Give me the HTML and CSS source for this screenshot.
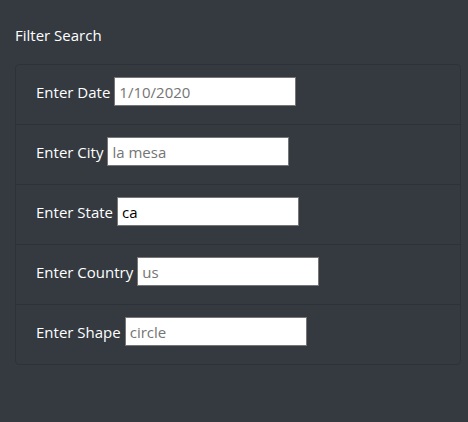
FILE: index.html
```html
<!DOCTYPE html>
<html>
<head>
<meta charset="utf-8">
<link rel="stylesheet" href="styles.css">
</head>
<body>
<div class="page">
  <div class="title">Filter Search</div>
  <ul class="filters">
    <li class="filter"><label for="date">Enter Date</label><input id="date" type="text" placeholder="1/10/2020"></li>
    <li class="filter"><label for="city">Enter City</label><input id="city" type="text" placeholder="la mesa"></li>
    <li class="filter"><label for="state">Enter State</label><input id="state" type="text" value="ca"></li>
    <li class="filter"><label for="country">Enter Country</label><input id="country" type="text" placeholder="us"></li>
    <li class="filter"><label for="shape">Enter Shape</label><input id="shape" type="text" placeholder="circle"></li>
  </ul>
</div>
</body>
</html>
```

FILE: styles.css
```css
html, body {
  margin: 0;
  background: #343a40;
  height: 100%;
}
body {
  font-family: "Open Sans", "Noto Sans", sans-serif;
  font-size: 15px;
  color: #ffffff;
}
.page {
  padding: 23px 7px 0 15px;
}
.title {
  line-height: 24px;
  margin-bottom: 17px;
}
.filters {
  list-style: none;
  margin: 0;
  padding: 0;
  border: 1px solid rgba(0, 0, 0, 0.125);
  border-radius: 4px;
}
.filter {
  display: flex;
  align-items: baseline;
  gap: 4px;
  padding: 12px 20px 18px;
  border-top: 1px solid rgba(0, 0, 0, 0.125);
}
.filter:first-child {
  border-top: none;
}
.filter label {
  line-height: 24px;
}
.filter input {
  box-sizing: border-box;
  width: 182px;
  height: 29px;
  margin: 0;
  padding: 1px 4px;
  border: 1px solid #767676;
  background: #ffffff;
  color: #000;
  font-family: inherit;
  font-size: 15px;
  outline: none;
}
.filter input::placeholder {
  color: #757575;
}
```
